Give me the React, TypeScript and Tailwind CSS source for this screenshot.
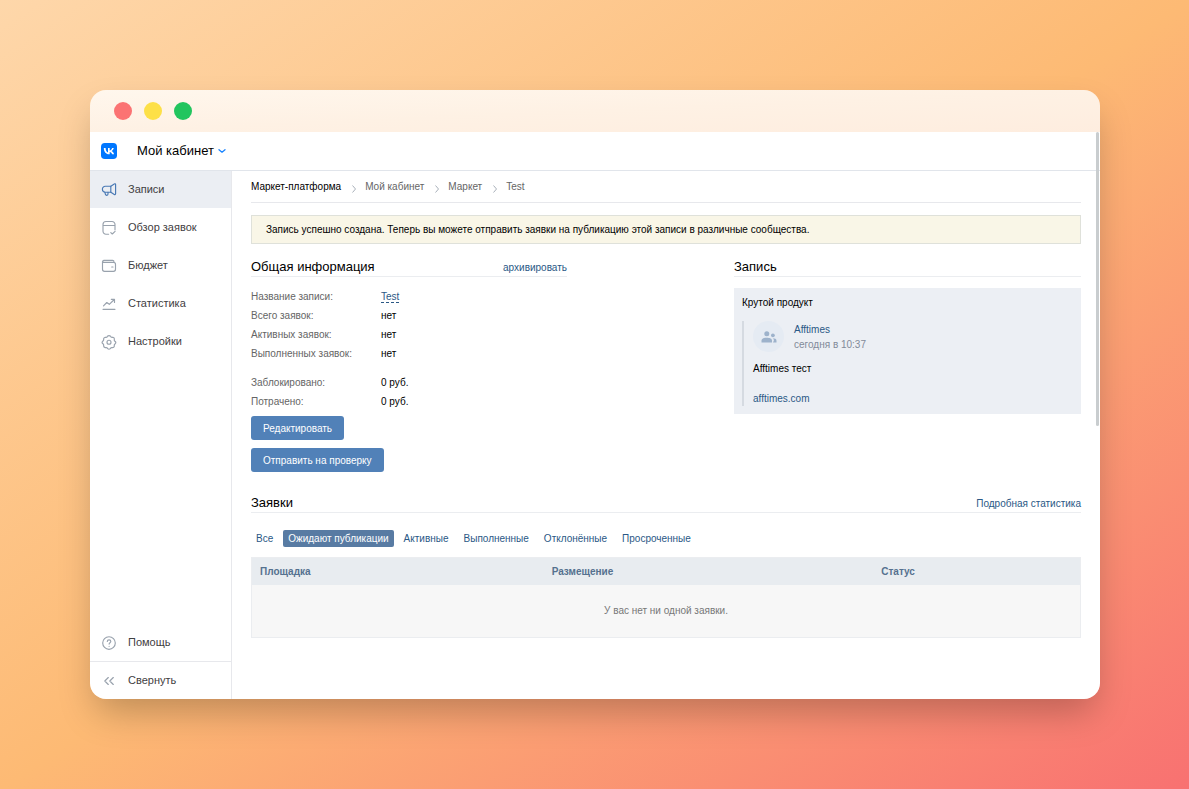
import type { ReactNode } from 'react';

function Svg({ children, className = 'text-[#99a2ad]' }: { children: ReactNode; className?: string }) {
  return (
    <svg
      viewBox="0 0 16 16"
      className={`size-4 shrink-0 ${className}`}
      fill="none"
      stroke="currentColor"
      strokeWidth="1.15"
      strokeLinecap="round"
      strokeLinejoin="round"
      aria-hidden="true"
    >
      {children}
    </svg>
  );
}

const nav = [
  {
    label: 'Записи',
    active: true,
    icon: (
      <Svg className="text-[#4a7ab5]">
        <path d="M9.800 4.200H4.300a2.900 2.900 0 0 0-2.900 2.900v.2a2.900 2.900 0 0 0 2.900 2.900h5.500z" />
        <path d="M9.800 4.200l3.500-2.300c.6-.4 1.300 0 1.300.7v9.200c0 .7-.7 1.100-1.300.7l-3.500-2.300" />
        <path d="M3.900 10.300l.5 2c.5 1.500 2.600 1.300 2.600-.3v-1.700" />
      </Svg>
    ),
  },
  {
    label: 'Обзор заявок',
    icon: (
      <Svg>
        <path d="M7.600 14.200H5a3 3 0 0 1-3-3V4.500a3 3 0 0 1 3-3h6a3 3 0 0 1 3 3v5.300M2 5.500h12M9.800 12.600l1.500 1.400 2.800-2.700" />
      </Svg>
    ),
  },
  {
    label: 'Бюджет',
    icon: (
      <Svg>
        <path d="M1.500 3.500v7.800a2 2 0 0 0 2 2h9a2 2 0 0 0 2-2V6.400a2 2 0 0 0-2-2H2.800a1.050 1.050 0 0 1 0-2.100h8.800a1.300 1.300 0 0 1 1.300 1.300M10.700 9h1.300" />
      </Svg>
    ),
  },
  {
    label: 'Статистика',
    icon: (
      <Svg>
        <path d="M2 13.300h12M2.500 9.800l3.300-3.300 2.500 1.800 5-4.800M10.300 3.300h3.200v3.200" />
      </Svg>
    ),
  },
  {
    label: 'Настройки',
    icon: (
      <Svg>
        <path d="M6.400 2.300Q8 1 9.600 2.300l.4.700 1 .4.900-.2q1.500.4 1.500 1.900l-.2.900.4 1 .7.500q1 1.100 0 2.200l-.7.500-.4 1 .2.900q-.4 1.500-1.900 1.500l-.6-.100-1 .4-.5.700q-1.400 1.100-2.800 0l-.5-.7-1-.4-.9.100q-1.500-.3-1.600-1.700l.1-.9-.4-1-.7-.5q-1-1.100 0-2.200l.7-.5.4-1-.1-.9q.2-1.400 1.600-1.700l.9.200 1-.4z" />
        <circle cx="8" cy="8.200" r="2" />
      </Svg>
    ),
  },
];

const facts = [
  { label: 'Название записи:', value: 'Test', link: true },
  { label: 'Всего заявок:', value: 'нет' },
  { label: 'Активных заявок:', value: 'нет' },
  { label: 'Выполненных заявок:', value: 'нет' },
  { label: 'Заблокировано:', value: '0 руб.', gap: true },
  { label: 'Потрачено:', value: '0 руб.' },
];

const tabs = ['Все', 'Ожидают публикации', 'Активные', 'Выполненные', 'Отклонённые', 'Просроченные'];

const itemClass = 'flex items-center gap-[11px] pl-[11px] text-[#3f4042]';

function Crumb({ children }: { children: ReactNode }) {
  return (
    <li className="flex items-center">
      <svg viewBox="0 0 6 8" className="mt-1 mr-2 ml-2.5 h-2 w-1.5" fill="none" stroke="#a8b0ba" aria-hidden="true">
        <path d="M1.500.5 4.500 4 1.500 7.500" />
      </svg>
      <a href="#" className="text-[#656565]">{children}</a>
    </li>
  );
}

function Sidebar() {
  return (
    <aside className="flex w-[142px] shrink-0 flex-col border-r border-[#e7e8ec] text-[11px]">
      <nav className="flex flex-col gap-px">
        {nav.map((n) => (
          <a key={n.label} href="#" className={`${itemClass} h-[37px] ${n.active ? 'bg-[#ebeef3]' : ''}`}>
            {n.icon}
            {n.label}
          </a>
        ))}
      </nav>
      <a href="#" className={`${itemClass} mt-auto h-[37px]`}>
        <Svg>
          <circle cx="8" cy="8" r="6.300" />
          <path d="M6.300 6.500c0-2.200 3.500-2.200 3.500 0 0 1.200-1.700 1.300-1.700 2.600" />
          <path d="M8.100 11.200v.1" />
        </Svg>
        Помощь
      </a>
      <button type="button" className={`${itemClass} h-[38px] border-t border-[#e7e8ec]`}>
        <Svg>
          <path d="M7.300 4.500 3.800 8l3.500 3.500M12.300 4.500 8.800 8l3.500 3.500" />
        </Svg>
        Свернуть
      </button>
    </aside>
  );
}

function General() {
  return (
    <section className="w-[316px]">
      <header className="flex h-[21px] items-start justify-between border-b border-[#ebedf0]">
        <h2 className="text-[13px] leading-[22px]">Общая информация</h2>
        <a href="#" className="leading-6 text-[#2a5885]">архивировать</a>
      </header>
      <dl className="mt-2.5">
        {facts.map((f) => (
          <div key={f.label} className={`flex h-[19px] items-center ${f.gap ? 'mt-2.5' : ''}`}>
            <dt className="w-[130px] text-[#656565]">{f.label}</dt>
            <dd>
              {f.link ? (
                <a href="#" className="border-b border-dashed border-[#2a5885] text-[#2a5885]">{f.value}</a>
              ) : (
                f.value
              )}
            </dd>
          </div>
        ))}
      </dl>
      <div className="mt-[5px] flex flex-col items-start gap-2">
        <button type="button" className="h-6 rounded-[3px] bg-[#5181b8] px-3 text-white">Редактировать</button>
        <button type="button" className="h-6 rounded-[3px] bg-[#5181b8] px-3 text-white">Отправить на проверку</button>
      </div>
    </section>
  );
}

function Post() {
  return (
    <section className="w-[347px]">
      <h2 className="h-[21px] border-b border-[#ebedf0] text-[13px] leading-[22px]">Запись</h2>
      <article className="mt-[11px] bg-[#eceff4] p-2">
        <p className="leading-[14px]">Крутой продукт</p>
        <div className="mt-[11px] border-l-2 border-[#d5dae1] pl-[9px]">
          <div className="flex items-center gap-2.5">
            <span className="flex size-[31px] items-center justify-center rounded-full bg-[#e5ebf3]">
              <svg viewBox="0 0 16 12" className="h-3 w-4" fill="#9db2cb" aria-hidden="true">
                <circle cx="5.800" cy="2.800" r="2.500" />
                <circle cx="11.900" cy="4.300" r="1.900" />
                <path d="M.5 11.500V9.600C.5 7.500 3 6.700 5.800 6.700s5.200.8 5.200 2.900v1.900zM12 11.500h3.500V9.800c0-1.800-1.700-2.500-3.700-2.500.8.700 1.100 1.400 1.100 2.300z" />
              </svg>
            </span>
            <div className="leading-[15px]">
              <a href="#" className="block text-[#2a5885]">Afftimes</a>
              <time className="block text-[#828a99]">сегодня в 10:37</time>
            </div>
          </div>
          <p className="mt-[9px] leading-[15px]">Afftimes тест</p>
          <a href="#" className="mt-[15px] block leading-[15px] text-[#2a5885]">afftimes.com</a>
        </div>
      </article>
    </section>
  );
}

function Requests() {
  return (
    <section className="mt-5">
      <header className="flex h-[21px] items-start justify-between border-b border-[#ebedf0]">
        <h2 className="text-[13px] leading-[22px]">Заявки</h2>
        <a href="#" className="leading-6 text-[#2a5885]">Подробная статистика</a>
      </header>
      <div className="mt-[17px] flex gap-[5px]">
        {tabs.map((t, i) => (
          <button
            key={t}
            type="button"
            className={`h-[17px] rounded-[2px] px-[5px] leading-[17px] ${i === 1 ? 'bg-[#587ba3] text-white' : 'text-[#2a5885]'}`}
          >
            {t}
          </button>
        ))}
      </div>
      <table className="mt-2.5 w-full table-fixed border border-[#ebedf0] bg-[#f7f7f7]">
        <thead className="bg-[#e8ecf0] text-left text-[#55718f]">
          <tr className="h-[27px]">
            <th className="w-[35%] pl-2">Площадка</th>
            <th className="w-[40%] pl-2.5">Размещение</th>
            <th className="pl-2">Статус</th>
          </tr>
        </thead>
        <tbody>
          <tr className="h-[53px]">
            <td colSpan={3} className="text-center text-[#777777]">У вас нет ни одной заявки.</td>
          </tr>
        </tbody>
      </table>
    </section>
  );
}

export default function App() {
  return (
    <div className="flex min-h-screen flex-col bg-[linear-gradient(to_bottom_right,#fed7aa,#fdba74,#f87171)] p-[90px] pr-[89px] font-['Liberation_Sans',Arial,sans-serif] text-black">
      <div className="flex flex-1 flex-col overflow-hidden rounded-2xl shadow-[0_18px_36px_-6px_rgba(0,0,0,0.25)]">
        <div className="flex h-[42px] items-center gap-3 bg-[linear-gradient(to_bottom_right,#fff7ed,#fef1e4,#feeddf)] pl-6">
          <span className="size-[18px] rounded-full bg-[#fb7373]" />
          <span className="size-[18px] rounded-full bg-[#fde047]" />
          <span className="size-[18px] rounded-full bg-[#22c55e]" />
        </div>
        <div className="relative flex flex-1 flex-col bg-white">
          <span className="absolute top-0 right-px h-[294px] w-[3px] rounded-full bg-[#c9cdcf]" />
          <header className="flex h-[39px] items-center gap-5 border-b border-[#e1e5eb] pl-[11px]">
            <svg viewBox="0 0 16 16" className="size-4" role="img" aria-label="VK">
              <rect width="16" height="16" rx="3.800" fill="#0077ff" />
              <path fill="#fff" d="M8.500 11.300C5 11.300 2.900 9 2.800 5h1.800c.1 2.900 1.400 4.200 2.400 4.400V5h1.700v2.500c1-.1 2-1.200 2.400-2.500h1.700c-.3 1.500-1.400 2.600-2.200 3.100.8.400 2 1.300 2.500 3.200h-1.900c-.4-1.200-1.300-2.100-2.500-2.300v2.300z" />
            </svg>
            <button type="button" className="flex items-center gap-1 text-[13px]">
              Мой кабинет
              <svg viewBox="0 0 8 6" className="h-1.5 w-2" fill="none" stroke="#1a84ff" strokeWidth="1.300" strokeLinecap="round" strokeLinejoin="round" aria-hidden="true">
                <path d="M1 1.700 4 4.200 7 1.700" />
              </svg>
            </button>
          </header>
          <div className="flex flex-1">
            <Sidebar />
            <main className="min-w-0 flex-1 px-[19px] text-[10px]">
              <ol className="flex h-8 items-center border-b border-[#e7e8ec]">
                <li><a href="#">Маркет-платформа</a></li>
                <Crumb>Мой кабинет</Crumb>
                <Crumb>Маркет</Crumb>
                <Crumb>Test</Crumb>
              </ol>
              <p className="mt-3 border border-[#dfe1da] bg-[#f9f6e7] px-3.5 py-[5px] leading-[17px]">
                Запись успешно создана. Теперь вы можете отправить заявки на публикацию этой записи в различные сообщества.
              </p>
              <div className="mt-3 flex justify-between gap-6">
                <General />
                <Post />
              </div>
              <Requests />
            </main>
          </div>
        </div>
      </div>
    </div>
  );
}
